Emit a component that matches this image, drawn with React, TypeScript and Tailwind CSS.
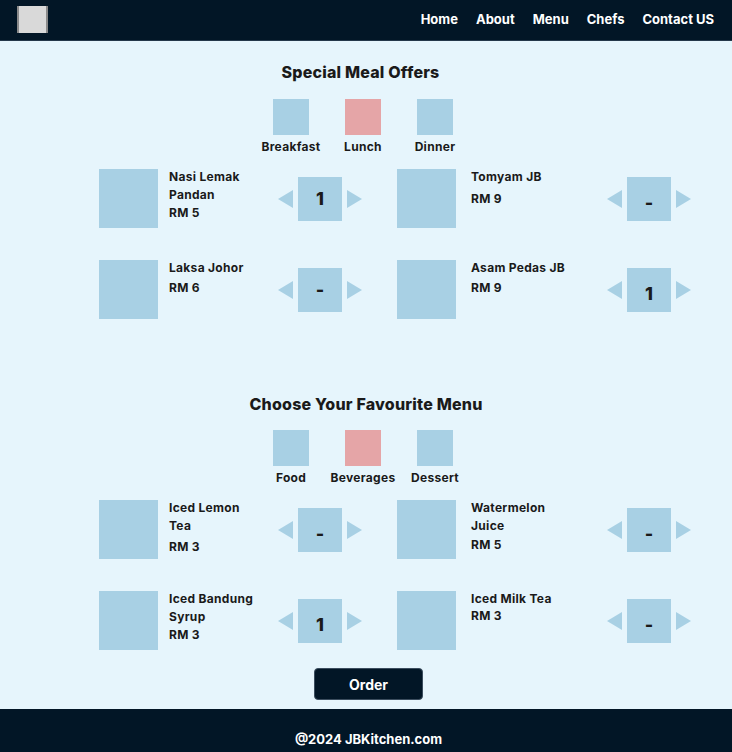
import React from "react";

type Item = {
  name: string;
  price: string;
  value: string;
  priceGap: string;
  low: boolean;
};

const meals: Item[][] = [
  [
    { name: "Nasi Lemak Pandan", price: "RM 5", value: "1", priceGap: "mt-0", low: false },
    { name: "Tomyam JB", price: "RM 9", value: "-", priceGap: "mt-[4px]", low: true },
  ],
  [
    { name: "Laksa Johor", price: "RM 6", value: "-", priceGap: "mt-[2px]", low: false },
    { name: "Asam Pedas JB", price: "RM 9", value: "1", priceGap: "mt-[2px]", low: true },
  ],
];

const drinks: Item[][] = [
  [
    { name: "Iced Lemon Tea", price: "RM 3", value: "-", priceGap: "mt-[3px]", low: true },
    { name: "Watermelon Juice", price: "RM 5", value: "-", priceGap: "mt-[1px]", low: true },
  ],
  [
    { name: "Iced Bandung Syrup", price: "RM 3", value: "1", priceGap: "mt-0", low: true },
    { name: "Iced Milk Tea", price: "RM 3", value: "-", priceGap: "-mt-[1px]", low: true },
  ],
];

function Arrow({ dir }: { dir: "left" | "right" }) {
  return (
    <svg width="15" height="18" viewBox="0 0 15 18" className="shrink-0">
      <polygon
        points={dir === "left" ? "15,0 15,18 0,9" : "0,0 0,18 15,9"}
        fill="#a8d0e4"
      />
    </svg>
  );
}

function Stepper({ value, low }: { value: string; low: boolean }) {
  return (
    <div className="flex items-center gap-[5px] shrink-0">
      <Arrow dir="left" />
      <div
        className={`w-[44px] h-[44px] bg-[#a8d0e4] flex items-center justify-center text-[18px] font-extrabold text-[#1a1a1a] ${
          low ? "pt-[8px]" : ""
        }`}
      >
        {value}
      </div>
      <Arrow dir="right" />
    </div>
  );
}

function FoodRow({ item, textW, nameW, gap }: { item: Item; textW: string; nameW: string; gap: string }) {
  return (
    <div className="flex items-center">
      <div className="w-[59px] h-[59px] bg-[#a8d0e4] shrink-0 self-start" />
      <div
        className={`${gap} ${textW} self-start text-[12px] font-bold leading-[18px] tracking-[0.3px] text-[#1a1a1a] -mt-[1px]`}
      >
        <div className={nameW}>{item.name}</div>
        <div className={item.priceGap}>{item.price}</div>
      </div>
      <Stepper value={item.value} low={item.low} />
    </div>
  );
}

function Category({ label, active }: { label: string; active?: boolean }) {
  return (
    <div className="w-[72px] flex flex-col items-center">
      <div className={`w-[36px] h-[36px] ${active ? "bg-[#e5a5a7]" : "bg-[#a8d0e4]"}`} />
      <div className="mt-[3px] text-[12px] font-bold leading-[18px] tracking-[0.3px] text-[#1a1a1a] whitespace-nowrap">
        {label}
      </div>
    </div>
  );
}

function ItemGrid({ rows }: { rows: Item[][] }) {
  return (
    <div className="ml-[99px] flex flex-col gap-[32px]">
      {rows.map((row, i) => (
        <div key={i} className="flex gap-[35px]">
          <FoodRow item={row[0]} textW="w-[109px]" nameW="max-w-[90px]" gap="ml-[11px]" />
          <FoodRow item={row[1]} textW="w-[136px]" nameW="max-w-[100px]" gap="ml-[15px]" />
        </div>
      ))}
    </div>
  );
}

export default function App() {
  return (
    <div className="min-h-screen bg-[#e6f5fc] font-['Inter','Liberation_Sans',sans-serif]">
      <header className="h-[41px] bg-[#021626] flex items-center justify-between pl-[17px] pr-[18px] border-b border-[#24384a]">
        <div className="w-[31px] h-[27px] bg-[#d9d9d9] border-x-2 border-[#8a8a8a] -mt-[1px]" />
        <nav className="flex items-center gap-[18px] text-[13px] font-bold text-white">
          <a href="#">Home</a>
          <a href="#">About</a>
          <a href="#">Menu</a>
          <a href="#">Chefs</a>
          <a href="#">Contact US</a>
        </nav>
      </header>

      <main className="flex flex-col">
        <h2 className="mt-[19px] text-center text-[16px] font-extrabold leading-[24px] tracking-[0.2px] text-[#1a1a1a] pr-[11px]">
          Special Meal Offers
        </h2>
        <div className="mt-[15px] flex justify-center pr-[6px]">
          <Category label="Breakfast" />
          <Category label="Lunch" active />
          <Category label="Dinner" />
        </div>
        <div className="mt-[13px]">
          <ItemGrid rows={meals} />
        </div>

        <h2 className="mt-[73px] text-center text-[16px] font-extrabold leading-[24px] tracking-[0.2px] text-[#1a1a1a]">
          Choose Your Favourite Menu
        </h2>
        <div className="mt-[14px] flex justify-center pr-[6px]">
          <Category label="Food" />
          <Category label="Beverages" active />
          <Category label="Dessert" />
        </div>
        <div className="mt-[13px]">
          <ItemGrid rows={drinks} />
        </div>

        <div className="mt-[18px] flex justify-center pl-[5px]">
          <button className="w-[109px] h-[32px] rounded-[4px] bg-[#021626] border border-[#3b4d5e] text-white text-[14px] font-bold">
            Order
          </button>
        </div>
      </main>

      <footer className="mt-[9px] bg-[#021626] pt-[21px] pb-[20px] text-center text-white text-[13px] font-bold pl-[5px]">
        @2024 JBKitchen.com
      </footer>
    </div>
  );
}
